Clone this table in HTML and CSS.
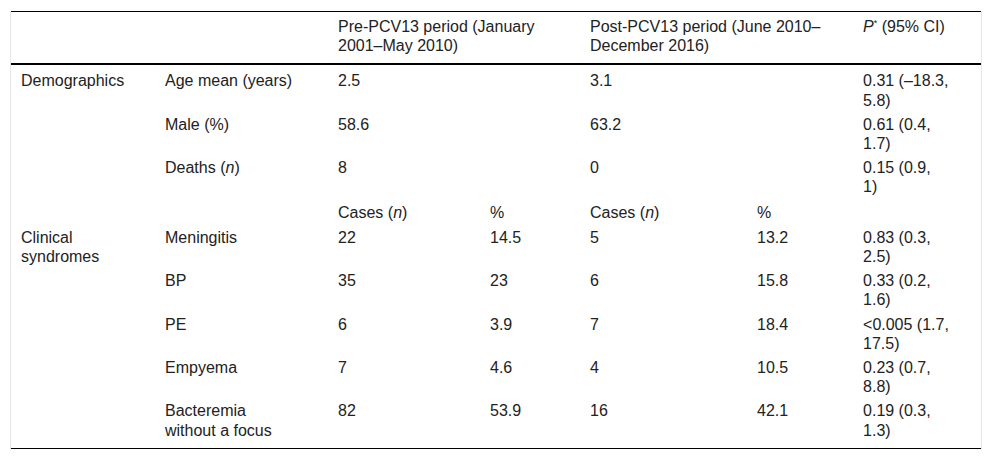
FILE: index.html
```html
<!DOCTYPE html>
<html lang="en">
<head>
<meta charset="utf-8">
<title>Table</title>
<link rel="stylesheet" href="styles.css">
</head>
<body>
<div class="frame">
  <table class="data">
    <colgroup>
      <col class="w1"><col class="w2"><col class="w3"><col class="w4"><col class="w5"><col class="w6"><col class="w7">
    </colgroup>
    <thead>
      <tr>
        <th></th>
        <th></th>
        <th colspan="2">Pre-PCV13 period (January 2001–May 2010)</th>
        <th colspan="2">Post-PCV13 period (June 2010–December 2016)</th>
        <th class="pcol"><i>P</i><sup>*</sup> (95% CI)</th>
      </tr>
    </thead>
    <tbody>
      <tr class="first">
        <td rowspan="3">Demographics</td>
        <td class="lab">Age mean (years)</td>
        <td colspan="2">2.5</td>
        <td colspan="2">3.1</td>
        <td class="pcol">0.31 (–18.3, 5.8)</td>
      </tr>
      <tr>
        <td class="lab">Male (%)</td>
        <td colspan="2">58.6</td>
        <td colspan="2">63.2</td>
        <td class="pcol">0.61 (0.4, 1.7)</td>
      </tr>
      <tr>
        <td class="lab">Deaths (<i>n</i>)</td>
        <td colspan="2">8</td>
        <td colspan="2">0</td>
        <td class="pcol">0.15 (0.9, 1)</td>
      </tr>
      <tr class="sub">
        <td></td>
        <td class="lab"></td>
        <td>Cases (<i>n</i>)</td>
        <td>%</td>
        <td>Cases (<i>n</i>)</td>
        <td>%</td>
        <td class="pcol"></td>
      </tr>
      <tr>
        <td rowspan="5">Clinical syndromes</td>
        <td class="lab">Meningitis</td>
        <td>22</td>
        <td>14.5</td>
        <td>5</td>
        <td>13.2</td>
        <td class="pcol">0.83 (0.3, 2.5)</td>
      </tr>
      <tr>
        <td class="lab">BP</td>
        <td>35</td>
        <td>23</td>
        <td>6</td>
        <td>15.8</td>
        <td class="pcol">0.33 (0.2, 1.6)</td>
      </tr>
      <tr>
        <td class="lab">PE</td>
        <td>6</td>
        <td>3.9</td>
        <td>7</td>
        <td>18.4</td>
        <td class="pcol">&lt;0.005 (1.7, 17.5)</td>
      </tr>
      <tr>
        <td class="lab">Empyema</td>
        <td>7</td>
        <td>4.6</td>
        <td>4</td>
        <td>10.5</td>
        <td class="pcol">0.23 (0.7, 8.8)</td>
      </tr>
      <tr class="last">
        <td class="lab">Bacteremia without a focus</td>
        <td>82</td>
        <td>53.9</td>
        <td>16</td>
        <td>42.1</td>
        <td class="pcol">0.19 (0.3, 1.3)</td>
      </tr>
    </tbody>
  </table>
</div>
</body>
</html>
```
FILE: styles.css
```css
html, body {
  margin: 0;
  padding: 0;
  background: #ffffff;
}

body {
  font-family: "Liberation Sans", Arial, sans-serif;
  font-size: 16px;
  color: #222222;
}

.frame {
  margin: 11px 10px 0 10px;
  width: 970px;
  border-left: 1px solid #e6e6e6;
  border-right: 1px solid #e6e6e6;
}

.data {
  width: 970px;
  border-collapse: collapse;
  table-layout: fixed;
  line-height: 19.2px;
}

.w1 { width: 144px; }
.w2 { width: 173px; }
.w3 { width: 152px; }
.w4 { width: 100px; }
.w5 { width: 167px; }
.w6 { width: 106px; }
.w7 { width: 128px; }

.data thead tr {
  border-top: 1px solid #000000;
  border-bottom: 2px solid #000000;
}

.data th {
  font-weight: normal;
  text-align: left;
  vertical-align: top;
  padding: 5px 10px 8px 10px;
}

.data td {
  text-align: left;
  vertical-align: top;
  padding: 2px 10px 3px 10px;
}

.data td.lab {
  padding-right: 33px;
}

.data .pcol {
  padding-right: 32px;
}

.data tr.first td {
  padding-top: 6px;
}

.data tr.sub td {
  padding-top: 3px;
  padding-bottom: 4px;
}

.data tr.last td {
  padding-bottom: 8px;
}

.data tbody tr.last {
  border-bottom: 1px solid #000000;
}

.data sup {
  font-size: 9px;
  line-height: 0;
  vertical-align: 6px;
}
```
